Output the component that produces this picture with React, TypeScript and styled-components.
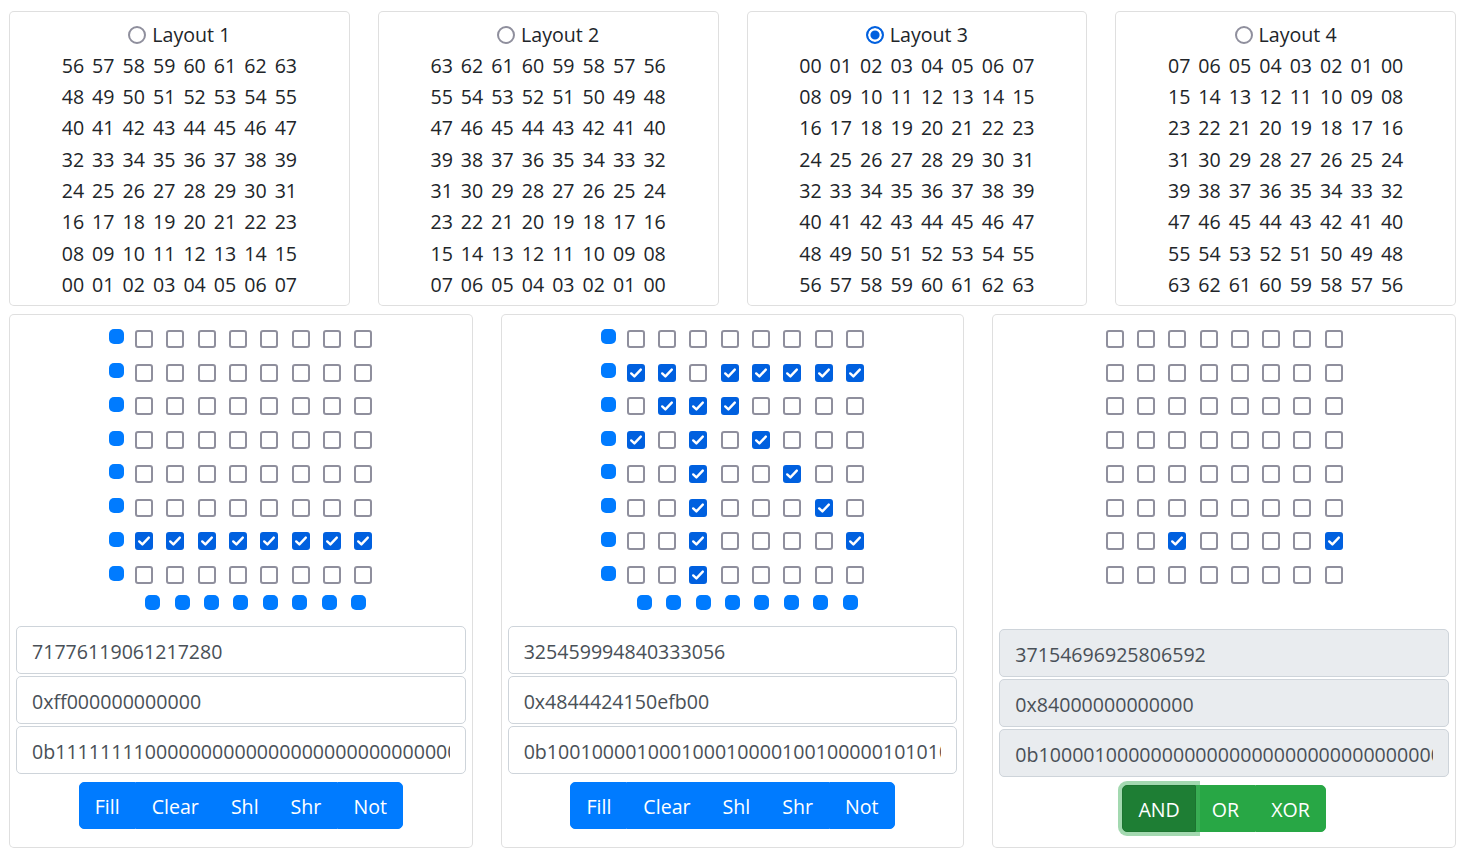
import React from "react";
import styled, { createGlobalStyle } from "styled-components";

const Global = createGlobalStyle`
  html, body { margin: 0; padding: 0; background: #fff; }
  body {
    font-family: "Open Sans", "Noto Sans", sans-serif;
    font-size: 19.6px;
    color: #212529;
  }
  * { box-sizing: border-box; }
`;

const Page = styled.div`
  padding: 11px 10px 0 9px;
  display: flex;
  flex-direction: column;
  gap: 8px;
`;

const TopRow = styled.div`
  display: grid;
  grid-template-columns: repeat(4, 1fr);
  gap: 28px;
`;

const BottomRow = styled.div`
  display: grid;
  grid-template-columns: repeat(3, 1fr);
  gap: 28px;
`;

const Card = styled.div`
  border: 1px solid rgba(0, 0, 0, 0.125);
  border-radius: 5px;
  background: #fff;
`;

const LayoutCard = styled(Card)`
  padding: 7.5px 0 4.4px;
  display: flex;
  flex-direction: column;
  align-items: center;
`;

const LayoutTitle = styled.label`
  height: 30px;
  display: flex;
  align-items: center;
  gap: 6px;
  line-height: 30px;
`;

const Radio = styled.span<{ $checked: boolean }>`
  width: 18px;
  height: 18px;
  border-radius: 50%;
  border: 2px solid ${(p) => (p.$checked ? "#0060df" : "#8f8f9d")};
  background: ${(p) => (p.$checked ? "#0060df" : "#fff")};
  box-shadow: ${(p) => (p.$checked ? "inset 0 0 0 2.4px #fff" : "none")};
`;

const NumberRow = styled.div`
  height: 31.4px;
  display: flex;
  align-items: center;
  gap: 8px;
  line-height: 31.4px;
`;

const BoardCard = styled(Card)`
  padding: 7px 6px 15px;
  display: flex;
  flex-direction: column;
`;

const CellRow = styled.div`
  height: 33.75px;
  display: flex;
  align-items: center;
  justify-content: center;
  gap: 13.3px;
`;

const Dot = styled.span`
  width: 15px;
  height: 15px;
  border-radius: 5px;
  background: #007bff;
  flex: none;
`;

const RowDot = styled(Dot)`
  margin-right: -2.6px;
  margin-bottom: 4px;
`;

const DotRow = styled.div`
  height: 20px;
  margin-bottom: 14px;
  display: flex;
  align-items: center;
  justify-content: center;
  gap: 14.4px;
`;

const DotSpacer = styled.span`
  width: 15px;
  height: 15px;
  flex: none;
`;

const EmptyFooter = styled.div`
  height: 37px;
`;

const Box = styled.span<{ $checked: boolean }>`
  width: 18px;
  height: 18px;
  flex: none;
  border-radius: 3px;
  border: 2px solid ${(p) => (p.$checked ? "#0060df" : "#8f8f9d")};
  background: ${(p) => (p.$checked ? "#0060df" : "#fff")};
  display: flex;
  align-items: center;
  justify-content: center;
  svg {
    display: block;
  }
`;

const Fields = styled.div`
  display: flex;
  flex-direction: column;
  gap: 2px;
`;

const Field = styled.input`
  height: 48px;
  width: 100%;
  padding: 9px 15px 6px;
  font: inherit;
  font-size: 19.6px;
  line-height: 30px;
  color: #495057;
  border: 1.25px solid #ced4da;
  border-radius: 5px;
  background: #fff;
  outline: none;
  &:disabled {
    background: #e9ecef;
    color: #495057;
    opacity: 1;
  }
`;

const Group = styled.div`
  align-self: center;
  display: flex;
  margin-top: 8px;
`;

const Btn = styled.button<{ $variant: "primary" | "success"; $active?: boolean }>`
  font: inherit;
  font-size: 19.6px;
  line-height: 30px;
  padding: 9px 15px 6px;
  color: #fff;
  border: 1.25px solid
    ${(p) => (p.$active ? "#1c7430" : p.$variant === "primary" ? "#007bff" : "#28a745")};
  background: ${(p) => (p.$active ? "#1e7e34" : p.$variant === "primary" ? "#007bff" : "#28a745")};
  box-shadow: ${(p) => (p.$active ? "0 0 0 4px rgba(72, 180, 97, 0.5)" : "none")};
  position: relative;
  z-index: ${(p) => (p.$active ? 1 : 0)};
  border-radius: 0;
  cursor: pointer;
  &:first-child {
    border-top-left-radius: 5px;
    border-bottom-left-radius: 5px;
  }
  &:last-child {
    border-top-right-radius: 5px;
    border-bottom-right-radius: 5px;
  }
`;

const range = (a: number, b: number) => {
  const out: number[] = [];
  if (a <= b) for (let i = a; i <= b; i++) out.push(i);
  else for (let i = a; i >= b; i--) out.push(i);
  return out;
};

const layouts = [
  { label: "Layout 1", checked: false, rows: range(7, 0).map((r) => range(0, 7).map((c) => r * 8 + c)) },
  { label: "Layout 2", checked: false, rows: range(7, 0).map((r) => range(7, 0).map((c) => r * 8 + c)) },
  { label: "Layout 3", checked: true, rows: range(0, 7).map((r) => range(0, 7).map((c) => r * 8 + c)) },
  { label: "Layout 4", checked: false, rows: range(0, 7).map((r) => range(7, 0).map((c) => r * 8 + c)) },
];

const pad = (n: number) => (n < 10 ? "0" + n : String(n));

const Check = () => (
  <svg width="14" height="14" viewBox="0 0 14 14">
    <path d="M2.2 7.4 L5.4 10.4 L11.8 3.6" fill="none" stroke="#fff" strokeWidth="2.4" strokeLinecap="round" strokeLinejoin="round" />
  </svg>
);

type Board = { hex: string; dots: boolean; ops: "bits" | "logic" };

const boards: Board[] = [
  { hex: "ff000000000000", dots: true, ops: "bits" },
  { hex: "4844424150efb00", dots: true, ops: "bits" },
  { hex: "84000000000000", dots: false, ops: "logic" },
];

const BoardView = ({ b }: { b: Board }) => {
  const big = BigInt("0x" + b.hex);
  const isSet = (r: number, c: number) => ((big >> BigInt(r * 8 + c)) & BigInt(1)) === BigInt(1);
  const disabled = b.ops === "logic";
  return (
    <BoardCard>
      {range(0, 7).map((r) => (
        <CellRow key={r}>
          {b.dots && <RowDot />}
          {range(0, 7).map((c) => (
            <Box key={c} $checked={isSet(r, c)}>
              {isSet(r, c) && <Check />}
            </Box>
          ))}
        </CellRow>
      ))}
      {b.dots ? (
        <DotRow>
          <DotSpacer />
          {range(0, 7).map((i) => (
            <Dot key={i} />
          ))}
        </DotRow>
      ) : (
        <EmptyFooter />
      )}
      <Fields>
        <Field readOnly disabled={disabled} value={big.toString()} />
        <Field readOnly disabled={disabled} value={"0x" + big.toString(16)} />
        <Field readOnly disabled={disabled} value={"0b" + big.toString(2)} />
      </Fields>
      <Group>
        {b.ops === "bits"
          ? ["Fill", "Clear", "Shl", "Shr", "Not"].map((t) => (
              <Btn key={t} $variant="primary">
                {t}
              </Btn>
            ))
          : ["AND", "OR", "XOR"].map((t, i) => (
              <Btn key={t} $variant="success" $active={i === 0}>
                {t}
              </Btn>
            ))}
      </Group>
    </BoardCard>
  );
};

export default function App() {
  return (
    <>
      <Global />
      <Page>
        <TopRow>
          {layouts.map((l) => (
            <LayoutCard key={l.label}>
              <LayoutTitle>
                <Radio $checked={l.checked} />
                {l.label}
              </LayoutTitle>
              {l.rows.map((row, i) => (
                <NumberRow key={i}>
                  {row.map((n) => (
                    <span key={n}>{pad(n)}</span>
                  ))}
                </NumberRow>
              ))}
            </LayoutCard>
          ))}
        </TopRow>
        <BottomRow>
          {boards.map((b) => (
            <BoardView key={b.hex} b={b} />
          ))}
        </BottomRow>
      </Page>
    </>
  );
}
